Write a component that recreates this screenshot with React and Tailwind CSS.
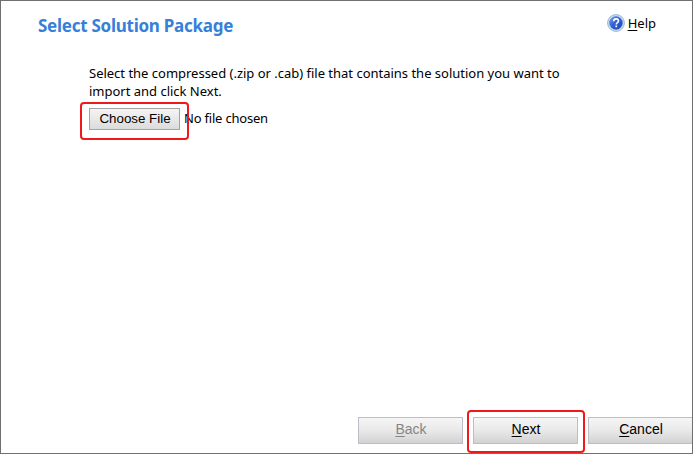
const uiFont = "font-['Noto_Sans','Open_Sans',sans-serif]";

function HelpIcon() {
  return (
    <svg width="18" height="18" viewBox="0 0 18 18" className="shrink-0">
      <defs>
        <linearGradient id="helpFill" x1="0" y1="0" x2="1" y2="1">
          <stop offset="0" stopColor="#7fa8f0" />
          <stop offset="0.45" stopColor="#2f62d8" />
          <stop offset="1" stopColor="#1743b8" />
        </linearGradient>
      </defs>
      <circle cx="9" cy="9" r="8.4" fill="#d3e1f2" stroke="#8fadd3" strokeWidth="0.9" />
      <circle cx="9" cy="9" r="6.5" fill="url(#helpFill)" stroke="#3c68c4" strokeWidth="0.5" />
      <path d="M6.7 7.2C6.7 5.7 7.7 4.9 9.1 4.9s2.4.8 2.4 2.1c0 1.6-2.2 1.7-2.2 3.4" fill="none" stroke="#fff" strokeWidth="1.6" />
      <rect x="8.4" y="11.5" width="1.8" height="1.7" fill="#fff" />
    </svg>
  );
}

function WizardButton({ accessKey, rest, disabled, className = "" }) {
  return (
    <button
      disabled={disabled}
      className={`h-[27px] w-[105px] shrink-0 border border-[#b9bfc5] bg-linear-to-b from-[#f6f6f6] via-[#e9e9e9] to-[#d2d2d2] pb-[3px] pl-px font-['Liberation_Sans',Arial,sans-serif] text-[14px] leading-[21px] ${disabled ? "text-[#858585]" : "text-black"} ${className}`}
    >
      <span className="underline underline-offset-2">{accessKey}</span>
      {rest}
    </button>
  );
}

export default function App() {
  return (
    <div className={`flex h-[454px] w-[693px] flex-col overflow-hidden border border-[#707070] bg-white text-[13px] text-black ${uiFont}`}>
      <header className="flex h-[63px] shrink-0 items-start justify-between pl-[37px] pr-[36px] pt-[13px]">
        <h1 className="whitespace-nowrap text-[17px] font-bold leading-6 tracking-[-0.26px] text-[#3780d8]">
          Select Solution Package
        </h1>
        <a className="flex items-center gap-[3px] leading-[18px]">
          <HelpIcon />
          <span>
            <span className="underline underline-offset-2">H</span>elp
          </span>
        </a>
      </header>
      <main className="grow pl-[88px]">
        <p className="whitespace-nowrap leading-[18px] tracking-[-0.01px]">
          Select the compressed (.zip or .cab) file that contains the solution you want to
          <br />
          import and click Next.
        </p>
        <div className="relative mt-[8px] flex h-[22px] items-center">
          <button className="h-[22px] w-[91px] border border-[#a3a3a3] bg-linear-to-b from-[#f4f4f4] to-[#dcdcdc] pl-px font-['Liberation_Sans',Arial,sans-serif] text-[13.33px] leading-5">
            Choose File
          </button>
          <span className="ml-[4px] whitespace-nowrap tracking-[-0.2px]">No file chosen</span>
          <div className="absolute -left-[9px] -top-[6px] h-[38px] w-[109px] rounded-[4px] border-2 border-[#f01818]" />
        </div>
      </main>
      <footer className="flex h-[36px] shrink-0 items-start gap-[10px] pl-[357px]">
        <WizardButton accessKey="B" rest="ack" disabled />
        <div className="relative flex shrink-0">
          <WizardButton accessKey="N" rest="ext" />
          <div className="absolute -left-[6px] -top-[7px] h-[43px] w-[118px] rounded-[4px] border-2 border-[#f01818]" />
        </div>
        <WizardButton accessKey="C" rest="ancel" />
      </footer>
    </div>
  );
}
